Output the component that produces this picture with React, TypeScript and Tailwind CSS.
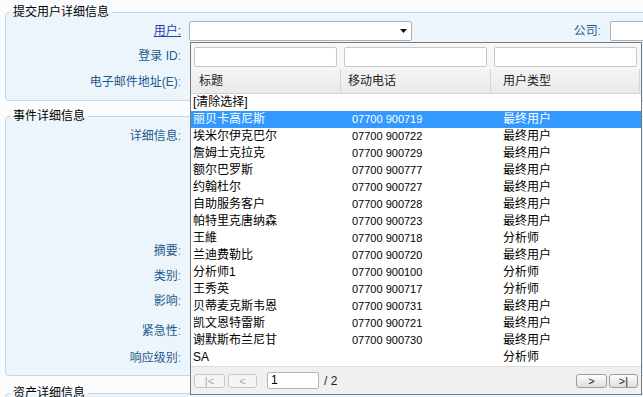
import React from "react";

const rows: [string, string, string][] = [
  ["丽贝卡高尼斯", "07700 900719", "最终用户"],
  ["埃米尔伊克巴尔", "07700 900722", "最终用户"],
  ["詹姆士克拉克", "07700 900729", "最终用户"],
  ["额尔巴罗斯", "07700 900777", "最终用户"],
  ["约翰杜尔", "07700 900727", "最终用户"],
  ["自助服务客户", "07700 900728", "最终用户"],
  ["帕特里克唐纳森", "07700 900723", "最终用户"],
  ["王維", "07700 900718", "分析师"],
  ["兰迪费勒比", "07700 900720", "最终用户"],
  ["分析师1", "07700 900100", "分析师"],
  ["王秀英", "07700 900717", "分析师"],
  ["贝蒂麦克斯韦恩", "07700 900731", "最终用户"],
  ["凯文恩特雷斯", "07700 900721", "最终用户"],
  ["谢默斯布兰尼甘", "07700 900730", "最终用户"],
  ["SA", "", "分析师"],
];

function Label({ text, className = "" }: { text: string; className?: string }) {
  return (
    <div className={"w-[175px] shrink-0 text-right text-[12px] leading-[16px] text-[#1c5a8c] " + className}>
      {text}
      <span className="text-[#6f8193]">:</span>
    </div>
  );
}

function PagerBtn({ label, disabled, w }: { label: string; disabled?: boolean; w: string }) {
  return (
    <div
      className={
        "h-[14px] rounded-[3px] border flex items-center justify-center text-[11px] leading-[12px] " +
        w +
        " " +
        (disabled
          ? "border-[#c6c6c6] bg-[#f5f5f5] text-[#a8a8a8]"
          : "border-[#9c9c9c] bg-gradient-to-b from-[#fdfdfd] to-[#dedede] text-[#222]")
      }
    >
      {label}
    </div>
  );
}

export default function App() {
  return (
    <div className="relative w-[643px] h-[397px] overflow-hidden bg-[#fafcfe] font-['Liberation_Sans','Noto_Sans_CJK_SC',sans-serif] text-black">
      <div className="w-[760px] pt-[4px] pl-[5px]">
        <fieldset className="border border-[#c8d6e4] rounded-[4px] bg-[#edf5fc] pb-[8px]">
          <legend className="ml-[4px] px-[3px] text-[12px] leading-[16px]">提交用户详细信息</legend>
          <div className="mt-[1px] h-[20px] flex items-center">
            <div className="w-[175px] shrink-0 text-right text-[12px] leading-[16px]">
              <span className="text-[#2440b0] underline">用户:</span>
            </div>
            <div className="ml-[8px] w-[223px] h-[20px] bg-white border border-[#a9b3be] rounded-[2px] relative">
              <svg className="absolute right-[4px] top-[7px]" width="7" height="4" viewBox="0 0 7 4">
                <path d="M0 0H7L3.5 4Z" fill="#111" />
              </svg>
            </div>
            <div className="w-[189px] text-right text-[12px] leading-[16px] text-[#1c5a8c]">
              公司<span className="text-[#6f8193]">:</span>
            </div>
            <div className="ml-[9px] w-[120px] h-[20px] bg-white border border-[#a9b3be] rounded-[2px]" />
          </div>
          <div className="mt-[5px] h-[20px] flex items-center">
            <Label text="登录 ID" />
          </div>
          <div className="mt-[6px] h-[20px] flex items-center">
            <Label text="电子邮件地址(E)" />
          </div>
        </fieldset>

        <fieldset className="mt-[7px] border border-[#c8d6e4] rounded-[4px] bg-[#edf5fc] pb-[7px]">
          <legend className="ml-[4px] px-[3px] text-[12px] leading-[16px]">事件详细信息</legend>
          <div className="h-[117px] flex items-start">
            <Label text="详细信息" className="mt-[4px]" />
          </div>
          <div className="h-[20px] flex items-center">
            <Label text="摘要" />
          </div>
          <div className="mt-[5px] h-[20px] flex items-center">
            <Label text="类别" />
          </div>
          <div className="mt-[5px] h-[20px] flex items-center">
            <Label text="影响" />
          </div>
          <div className="mt-[10px] h-[20px] flex items-center">
            <Label text="紧急性" />
          </div>
          <div className="mt-[7px] h-[20px] flex items-center">
            <Label text="响应级别" />
          </div>
        </fieldset>

        <fieldset className="mt-[9px] border border-[#c8d6e4] rounded-[4px] bg-[#edf5fc] h-[60px]">
          <legend className="ml-[4px] px-[3px] text-[12px] leading-[16px]">资产详细信息</legend>
        </fieldset>
      </div>

      {/* dropdown popup */}
      <div className="absolute left-[190px] top-[42px] w-[452px] border border-[#777b80] bg-white flex flex-col">
        <div className="h-[26px] bg-[#f7f7f7] flex items-start pt-[4px] pl-[3px] gap-[7px]">
          <div className="w-[143px] h-[20px] bg-white border border-[#c7c7c7] rounded-[2px]" />
          <div className="w-[143px] h-[20px] bg-white border border-[#c7c7c7] rounded-[2px]" />
          <div className="w-[143px] h-[20px] bg-white border border-[#c7c7c7] rounded-[2px]" />
        </div>
        <div className="h-[25px] grid grid-cols-[150px_150px_1fr] bg-gradient-to-b from-[#f4f4f4] to-[#eaeaea] border-b border-[#d3d3d3] text-[12px] text-[#222]">
          <div className="border-r border-[#d6d6d6] pl-[8px] flex items-center">标题</div>
          <div className="border-r border-[#d6d6d6] pl-[7px] flex items-center">移动电话</div>
          <div className="pl-[12px] flex items-center border-r border-[#d6d6d6] mr-[1px]">用户类型</div>
        </div>
        <div className="h-[17px] pl-[2px] text-[12px] leading-[17px]">[清除选择]</div>
        {rows.map(([name, phone, type], i) => (
          <div
            key={i}
            className={
              "h-[17px] grid grid-cols-[149px_150px_1fr] text-[12px] leading-[17px] " +
              (i === 0 ? "bg-[#3399ff] text-white" : "text-black")
            }
          >
            <div className="pl-[2px] whitespace-nowrap">{name}</div>
            <div className="pl-[12px] text-[11px] whitespace-nowrap">{phone}</div>
            <div className="pl-[13px] whitespace-nowrap">{type}</div>
          </div>
        ))}
        <div className="h-[28px] bg-[#f0f0f0] border-t border-[#dcdcdc] flex items-center pl-[3px] pr-[3px]">
          <PagerBtn label="|<" disabled w="w-[31px]" />
          <div className="w-[3px]" />
          <PagerBtn label="<" disabled w="w-[29px]" />
          <div className="ml-[10px] w-[52px] h-[17px] bg-white border border-[#b5b5b5] rounded-[2px] text-[12px] leading-[15px] pl-[3px]">
            1
          </div>
          <div className="ml-[5px] text-[12px] text-[#222]">/ 2</div>
          <div className="flex-1" />
          <PagerBtn label=">" w="w-[31px]" />
          <div className="w-[2px]" />
          <PagerBtn label=">|" w="w-[29px]" />
        </div>
      </div>
    </div>
  );
}
